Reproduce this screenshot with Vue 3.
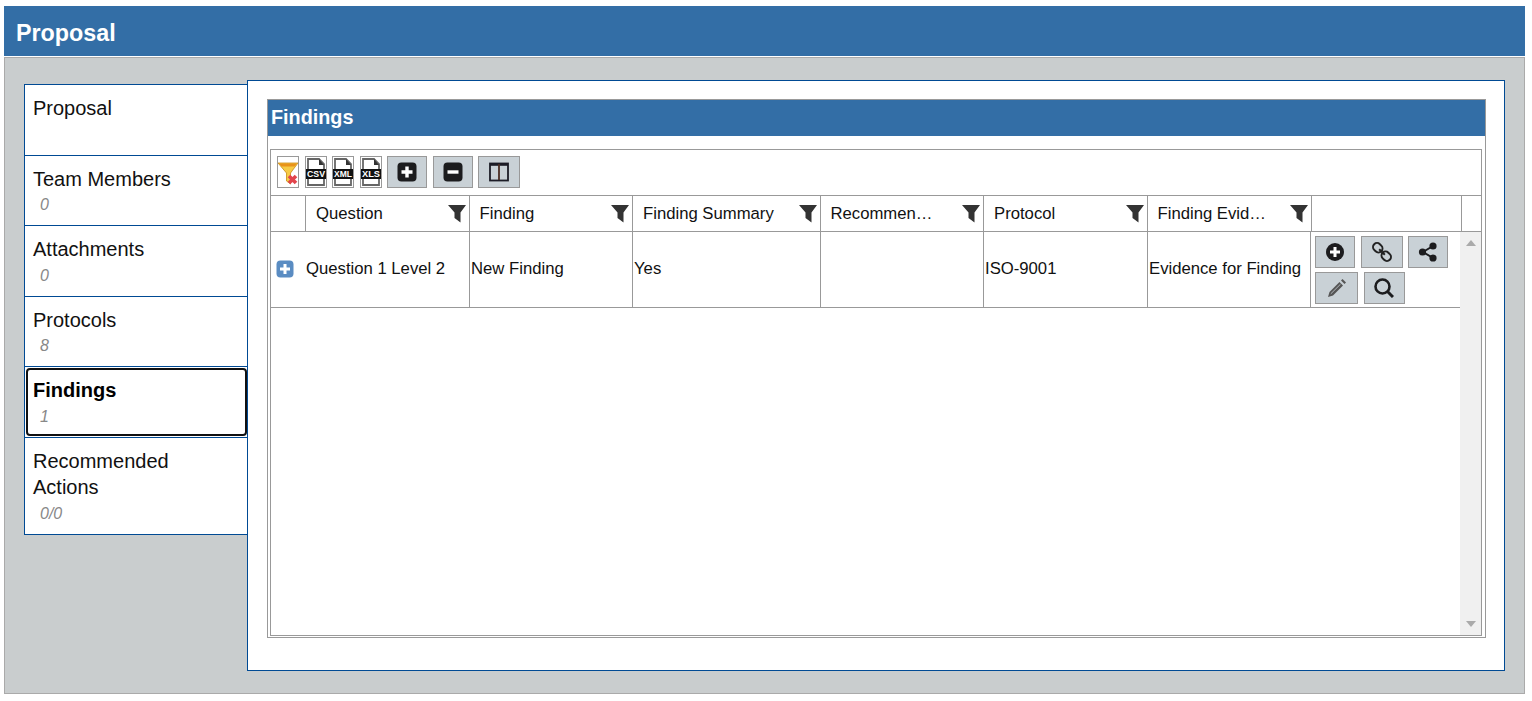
<script setup>
const navItems = [
  { label: 'Proposal', count: '' },
  { label: 'Team Members', count: '0' },
  { label: 'Attachments', count: '0' },
  { label: 'Protocols', count: '8' },
  { label: 'Findings', count: '1', active: true },
  { label: 'Recommended Actions', count: '0/0' }
]
const fileTypes = ['CSV', 'XML', 'XLS']
const headers = ['Question', 'Finding', 'Finding Summary', 'Recommended Actions', 'Protocol', 'Finding Evidence']
const cells = ['New Finding', 'Yes', '', 'ISO-9001', 'Evidence for Finding']
</script>

<template>
  <div class="page">
    <header class="title">Proposal</header>
    <div class="body">
      <nav class="side">
        <div v-for="item in navItems" :key="item.label" class="nav" :class="{ active: item.active }">
          <div class="nav-label">{{ item.label }}</div>
          <div class="nav-count">{{ item.count }}</div>
        </div>
      </nav>
      <main class="main">
        <section class="box">
          <h2 class="box-title">Findings</h2>
          <div class="grid">
            <div class="toolbar">
              <button class="file">
                <svg width="20" height="30" viewBox="0 0 20 30">
                  <path d="M0 6H20L12.500 16V27L8.500 24V16Z" fill="#f6cb45" stroke="#c98a14" stroke-width="0.800" />
                  <path d="M1 6.500H19L16.500 9.500H3.500Z" fill="#e8921a" />
                  <path d="M11 19L18 26M18 19L11 26" stroke="#e2444c" stroke-width="3.600" />
                </svg>
              </button>
              <button v-for="t in fileTypes" :key="t" class="file">
                <svg width="20" height="30" viewBox="0 0 20 30">
                  <path d="M2 28V2H13L18 7V28Z" fill="#fff" stroke="#666" stroke-width="1.800" />
                  <path d="M13 2V8H18Z" fill="#333" />
                  <rect x="0" y="12" width="20" height="10" fill="#111" />
                  <text x="10" y="20.400" class="file-text" text-anchor="middle" textLength="18" lengthAdjust="spacingAndGlyphs">{{ t }}</text>
                </svg>
              </button>
              <button class="btn w40">
                <svg width="20" height="20" viewBox="0 0 20 20">
                  <rect x="0.500" y="0.500" width="19" height="19" rx="4" fill="#1c1c1e" />
                  <path d="M10 4.500V15.500M4.500 10H15.500" stroke="#fff" stroke-width="3.400" />
                </svg>
              </button>
              <button class="btn w40">
                <svg width="20" height="20" viewBox="0 0 20 20">
                  <rect x="0.500" y="0.500" width="19" height="19" rx="4" fill="#1c1c1e" />
                  <path d="M4.500 10H15.500" stroke="#fff" stroke-width="3.400" />
                </svg>
              </button>
              <button class="btn w42">
                <svg width="20" height="20" viewBox="0 0 20 20">
                  <rect x="1" y="1.500" width="18" height="17" fill="none" stroke="#1c1c26" stroke-width="1.800" />
                  <path d="M1 2.500H19" stroke="#1c1c26" stroke-width="2.600" />
                  <path d="M10 2V18" stroke="#4a2c22" stroke-width="1.800" />
                </svg>
              </button>
            </div>

            <div class="head">
              <div class="hcell"></div>
              <div v-for="h in headers" :key="h" class="hcell">
                <span class="hlabel">{{ h }}</span>
                <svg class="filter" width="19" height="19" viewBox="0 0 19 19">
                  <path d="M0 1H18L12.500 8.500V18.500L6.500 14V8.500Z" fill="#333" />
                </svg>
              </div>
              <div class="hcell"></div>
              <div class="hcell last"></div>
            </div>

            <div class="scroll-wrap">
              <div class="rows">
                <div class="row">
                  <div class="cell first">
                    <svg class="expand" width="18" height="18" viewBox="0 0 18 18">
                      <rect x="0.500" y="0.500" width="17" height="17" rx="4" fill="#5a8cc2" />
                      <path d="M9 4V14M4 9H14" stroke="#fff" stroke-width="3" />
                    </svg>
                    <span>Question 1 Level 2</span>
                  </div>
                  <div v-for="(c, i) in cells" :key="i" class="cell">{{ c }}</div>
                  <div class="actions">
                    <button class="btn act w40">
                      <svg width="20" height="20" viewBox="0 0 20 20">
                        <circle cx="10" cy="10" r="9" fill="#1c1c1e" />
                        <path d="M10 5V15M5 10H15" stroke="#fff" stroke-width="3" />
                      </svg>
                    </button>
                    <button class="btn act w42">
                      <svg width="22" height="22" viewBox="0 0 22 22">
                        <g fill="none" stroke="#222" stroke-width="2" transform="rotate(-45 11 11)">
                          <rect x="7" y="0" width="8" height="10" rx="4" />
                          <rect x="7" y="12" width="8" height="10" rx="4" />
                          <path d="M11 7V15" />
                        </g>
                      </svg>
                    </button>
                    <button class="btn act w40">
                      <svg width="20" height="20" viewBox="0 0 20 20">
                        <path d="M15 4L5 10L15 16" fill="none" stroke="#1c1c1e" stroke-width="2" />
                        <circle cx="15" cy="4" r="3.600" fill="#1c1c1e" />
                        <circle cx="4.500" cy="10" r="3.600" fill="#1c1c1e" />
                        <circle cx="15" cy="16" r="3.600" fill="#1c1c1e" />
                      </svg>
                    </button>
                    <button class="btn act w43">
                      <svg width="20" height="20" viewBox="0 0 20 20">
                        <path d="M1 19L2.500 14L12.500 4L16 7.500L6 17.500Z" fill="#555" />
                        <path d="M3.800 15.800L13.500 6.200" stroke="#c9d1d6" stroke-width="0.800" />
                        <path d="M14 2.500L15.500 1L19 4.500L17.500 6Z" fill="#555" />
                      </svg>
                    </button>
                    <button class="btn act w41">
                      <svg width="20" height="20" viewBox="0 0 20 20">
                        <circle cx="8.500" cy="8.500" r="7" fill="none" stroke="#1c1c1e" stroke-width="2.600" />
                        <path d="M13.500 13.500L19 19" stroke="#1c1c1e" stroke-width="3" />
                      </svg>
                    </button>
                  </div>
                </div>
              </div>
              <div class="scrollbar">
                <span class="arrow up"></span>
                <span class="arrow down"></span>
              </div>
            </div>
          </div>
        </section>
      </main>
    </div>
  </div>
</template>

<style>
html, body { margin: 0; background: #fff; }
</style>

<style scoped>
.page {
  padding: 6px 7px 0 4px;
  font-family: "Liberation Sans", Arial, sans-serif;
  color: #111;
}
.title {
  height: 50px;
  line-height: 55px;
  padding-left: 12px;
  background: #336ea6;
  color: #fff;
  font-size: 23.300px;
  font-weight: 700;
}
.body {
  box-sizing: border-box;
  height: 637px;
  margin-top: 1px;
  padding: 22px 19px 0;
  display: flex;
  align-items: flex-start;
  background: #c9cdce;
  border: 1px solid #aaa;
}
.side {
  width: 223px;
  flex: none;
  margin-top: 4px;
  border-bottom: 1px solid #004a94;
}
.nav {
  position: relative;
  box-sizing: border-box;
  background: #fff;
  border-left: 1px solid #004a94;
  border-top: 1px solid #004a94;
  padding: 10px 30px 8px 8px;
  font-size: 20px;
}
.nav-label { line-height: 26px; }
.nav-count {
  height: 24px;
  line-height: 24px;
  margin-top: 1.500px;
  margin-left: 7px;
  font-size: 16px;
  font-style: italic;
  color: #888;
}
.nav:last-child .nav-count { margin-top: 2.500px; }
.active .nav-label { font-weight: 700; color: #000; }
.active::after {
  content: "";
  position: absolute;
  top: 0.500px;
  bottom: 1px;
  left: 1px;
  right: 0;
  border: 2px solid #111;
  border-radius: 4px;
}
.main {
  box-sizing: border-box;
  width: 1258px;
  height: 591px;
  flex: none;
  padding: 18px 18px 0 19px;
  background: #fff;
  border: 1px solid #004a94;
}
.box {
  box-sizing: border-box;
  height: 539px;
  border: 1px solid #999;
  padding: 0 3px 2px 2px;
}
.box-title {
  margin: 0 -3px 13px -2px;
  height: 36px;
  line-height: 35px;
  padding-left: 3px;
  background: #336ea6;
  color: #fff;
  font-size: 19.800px;
  font-weight: 700;
}
.grid {
  box-sizing: border-box;
  height: 487px;
  border: 1px solid #999;
  display: flex;
  flex-direction: column;
  font-size: 16.700px;
}
.toolbar {
  box-sizing: border-box;
  height: 46px;
  padding: 6px 0 0 6px;
  display: flex;
  align-items: flex-start;
  gap: 5.500px;
  border-bottom: 1px solid #999;
}
button {
  box-sizing: border-box;
  padding: 0;
  display: flex;
  align-items: center;
  justify-content: center;
}
.file {
  width: 22px;
  height: 32px;
  background: #fff;
  border: 1px solid #999;
}
.file-text {
  font-family: "Liberation Sans", Arial, sans-serif;
  font-size: 9.500px;
  font-weight: 700;
  fill: #fff;
}
.btn {
  height: 32px;
  background: #c9d1d6;
  border: 1px solid #999;
}
.w40 { width: 40px; }
.w41 { width: 41.500px; }
.w42 { width: 42px; }
.w43 { width: 43px; }
.head {
  display: grid;
  grid-template-columns: 35px 163.500px 163.500px 187.500px 163.500px 163.500px 164px 150px 1fr;
  height: 36px;
  box-sizing: border-box;
  border-bottom: 1px solid #999;
}
.hcell {
  box-sizing: border-box;
  display: flex;
  align-items: center;
  padding: 0 2px 0 10px;
  border-right: 1px solid #999;
  min-width: 0;
}
.hcell.last { border-right: 0; }
.hlabel {
  flex: 1;
  min-width: 0;
  margin-right: 22.500px;
  white-space: nowrap;
  overflow: hidden;
  text-overflow: ellipsis;
}
.filter { flex: none; }
.scroll-wrap {
  flex: 1;
  min-height: 0;
  display: flex;
}
.rows { flex: 1; min-width: 0; }
.row {
  display: grid;
  grid-template-columns: 199px 163px 188px 163px 164px 163px 1fr;
  height: 76px;
  box-sizing: border-box;
  border-bottom: 1px solid #999;
}
.cell {
  box-sizing: border-box;
  display: flex;
  align-items: center;
  padding: 0 0 2px 1px;
  border-right: 1px solid #999;
  white-space: nowrap;
}
.cell.first { padding-left: 5px; gap: 12px; }
.expand { flex: none; }
.actions {
  display: flex;
  flex-wrap: wrap;
  align-content: flex-start;
  column-gap: 5.500px;
  row-gap: 4px;
  padding: 4px 0 0 4px;
}
.scrollbar {
  width: 21px;
  flex: none;
  background: #f0f0f0;
  display: flex;
  flex-direction: column;
  align-items: center;
  justify-content: space-between;
  padding: 8px 0;
  box-sizing: border-box;
}
.arrow {
  width: 0;
  height: 0;
  border-left: 5px solid transparent;
  border-right: 5px solid transparent;
}
.arrow.up { border-bottom: 6px solid #aaa; }
.arrow.down { border-top: 6px solid #aaa; }
</style>
